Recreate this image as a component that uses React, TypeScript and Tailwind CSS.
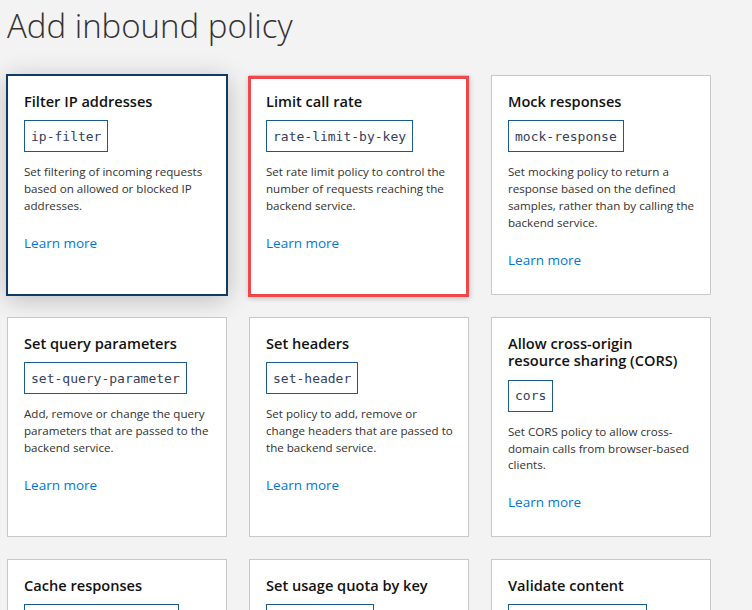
import React from 'react';

type Policy = {
  title: string[];
  code: string;
  lines: string[];
  selected?: boolean;
  highlighted?: boolean;
};

const policies: Policy[] = [
  {
    title: ['Filter IP addresses'],
    code: 'ip-filter',
    lines: ['Set filtering of incoming requests', 'based on allowed or blocked IP', 'addresses.'],
    selected: true,
  },
  {
    title: ['Limit call rate'],
    code: 'rate-limit-by-key',
    lines: ['Set rate limit policy to control the', 'number of requests reaching the', 'backend service.'],
    highlighted: true,
  },
  {
    title: ['Mock responses'],
    code: 'mock-response',
    lines: [
      'Set mocking policy to return a',
      'response based on the defined',
      'samples, rather than by calling the',
      'backend service.',
    ],
  },
  {
    title: ['Set query parameters'],
    code: 'set-query-parameter',
    lines: ['Add, remove or change the query', 'parameters that are passed to the', 'backend service.'],
  },
  {
    title: ['Set headers'],
    code: 'set-header',
    lines: ['Set policy to add, remove or', 'change headers that are passed to', 'the backend service.'],
  },
  {
    title: ['Allow cross-origin', 'resource sharing (CORS)'],
    code: 'cors',
    lines: ['Set CORS policy to allow cross-', 'domain calls from browser-based', 'clients.'],
  },
  {
    title: ['Cache responses'],
    code: 'cache-lookup/store',
    lines: ['Set caching policy to store and', 'return responses from the cache.'],
  },
  {
    title: ['Set usage quota by key'],
    code: 'quota-by-key',
    lines: ['Set quota policy to limit calls', 'and bandwidth per key.'],
  },
  {
    title: ['Validate content'],
    code: 'validate-content',
    lines: ['Validate the size or content of a', 'request or response body.'],
  },
];

function PolicyCard({ policy }: { policy: Policy }) {
  const cardClass = policy.selected
    ? 'border-[#0e3a68] shadow-[0_0_0_1px_#0e3a68,0_4px_24px_rgba(0,0,0,0.24)]'
    : policy.highlighted
      ? 'border-[#c8c8c8] shadow-[0_3px_6px_rgba(0,0,0,0.25)]'
      : 'border-[#c8c8c8]';

  return (
    <div className={`relative h-[220px] bg-white border pl-[16px] pr-3 pt-[17px] ${cardClass}`}>
      {/* Title */}
      <div className="text-[14.6px] leading-[17.4px] font-semibold text-[#111]">
        {policy.title.map(t => (
          <div key={t}>{t}</div>
        ))}
      </div>

      {/* Policy element */}
      <div className="mt-[10px] inline-flex h-8 items-center border border-[#1b5a8e] px-[6px] font-['DejaVu_Sans_Mono',monospace] text-[13px] text-[#34405a]">
        {policy.code}
      </div>

      {/* Description */}
      <div className="mt-[12px] text-[11.6px] leading-[16.8px] text-[#323130]">
        {policy.lines.map(l => (
          <div key={l} className="whitespace-nowrap">{l}</div>
        ))}
      </div>

      <a href="#" className="mt-[18px] block w-fit text-[13.5px] leading-5 text-[#0078d4]">
        Learn more
      </a>

      {/* Annotation frame */}
      {policy.highlighted && (
        <div className="pointer-events-none absolute -left-[2px] top-0 -right-[1px] -bottom-[3px] border-[3px] border-[#ef474b]" />
      )}
    </div>
  );
}

export default function App() {
  return (
    <div className="h-[610px] overflow-hidden bg-[#f3f3f3] pl-[7px] font-['Open_Sans',sans-serif]">
      <h1 className="pt-[6px] text-[33px] leading-10 font-light text-[#323130]">Add inbound policy</h1>
      <div className="mt-[29px] grid grid-cols-[220px_220px_220px] gap-[22px]">
        {policies.map(p => (
          <PolicyCard key={p.code} policy={p} />
        ))}
      </div>
    </div>
  );
}
